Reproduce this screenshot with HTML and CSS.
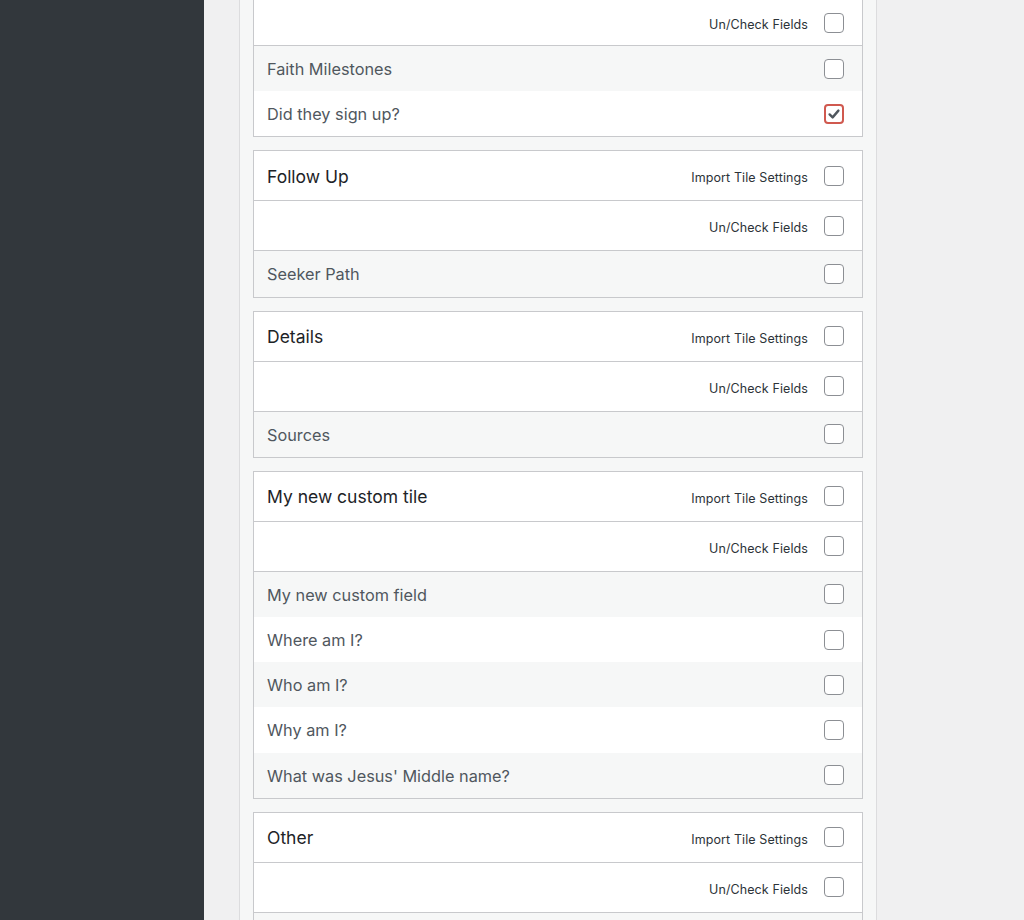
FILE: index.html
```html
<!DOCTYPE html>
<html lang="en">
<head>
<meta charset="utf-8">
<title>Tile settings</title>
<link rel="stylesheet" href="styles.css">
</head>
<body>
<div class="layout">
  <aside class="sidebar"></aside>
  <main class="main">
    <div class="panel">
      <section class="tile tile--cut">
        <div class="row row--toggle"><span class="small">Un/Check Fields</span><span class="cb"></span></div>
        <div class="fields">
          <div class="row row--field"><span class="label">Faith Milestones</span><span class="cb"></span></div>
          <div class="row row--field"><span class="label">Did they sign up?</span><span class="cb cb--checked"><svg viewBox="0 0 20 20" width="16" height="16"><path d="M4.5 10.5 L8.3 14.2 L15.5 5.8" fill="none" stroke="#50575e" stroke-width="3" stroke-linecap="round" stroke-linejoin="round"/></svg></span></div>
        </div>
      </section>

      <section class="tile">
        <div class="row row--head"><span class="title">Follow Up</span><span class="right"><span class="small">Import Tile Settings</span><span class="cb"></span></span></div>
        <div class="row row--toggle"><span class="small">Un/Check Fields</span><span class="cb"></span></div>
        <div class="fields">
          <div class="row row--field"><span class="label">Seeker Path</span><span class="cb"></span></div>
        </div>
      </section>

      <section class="tile">
        <div class="row row--head"><span class="title">Details</span><span class="right"><span class="small">Import Tile Settings</span><span class="cb"></span></span></div>
        <div class="row row--toggle"><span class="small">Un/Check Fields</span><span class="cb"></span></div>
        <div class="fields">
          <div class="row row--field"><span class="label">Sources</span><span class="cb"></span></div>
        </div>
      </section>

      <section class="tile">
        <div class="row row--head"><span class="title">My new custom tile</span><span class="right"><span class="small">Import Tile Settings</span><span class="cb"></span></span></div>
        <div class="row row--toggle"><span class="small">Un/Check Fields</span><span class="cb"></span></div>
        <div class="fields">
          <div class="row row--field"><span class="label">My new custom field</span><span class="cb"></span></div>
          <div class="row row--field"><span class="label">Where am I?</span><span class="cb"></span></div>
          <div class="row row--field"><span class="label">Who am I?</span><span class="cb"></span></div>
          <div class="row row--field"><span class="label">Why am I?</span><span class="cb"></span></div>
          <div class="row row--field"><span class="label">What was Jesus' Middle name?</span><span class="cb"></span></div>
        </div>
      </section>

      <section class="tile">
        <div class="row row--head"><span class="title">Other</span><span class="right"><span class="small">Import Tile Settings</span><span class="cb"></span></span></div>
        <div class="row row--toggle"><span class="small">Un/Check Fields</span><span class="cb"></span></div>
        <div class="fields">
          <div class="row row--field"><span class="label">&nbsp;</span><span class="cb"></span></div>
        </div>
      </section>
    </div>
  </main>
</div>
</body>
</html>
```
FILE: styles.css
```css
* { box-sizing: border-box; }
html, body { margin: 0; padding: 0; }
body {
  font-family: Inter, "Noto Sans", "Liberation Sans", sans-serif;
  height: 920px;
  overflow: hidden;
  background: #f0f0f1;
}
.layout {
  display: flex;
  height: 920px;
}
.sidebar {
  width: 204px;
  flex: none;
  background: #32373c;
}
.main {
  flex: 1;
  padding-left: 35px;
  background: #f0f0f1;
}
.panel {
  width: 638px;
  min-height: 920px;
  background: #f6f7f7;
  border-left: 1px solid #dcdcde;
  border-right: 1px solid #dcdcde;
  padding: 0 13px;
}
.tile {
  background: #fff;
  border: 1px solid #c8c9cc;
  margin-bottom: 13px;
}
.tile--cut {
  border-top: none;
}
.row {
  display: flex;
  align-items: center;
  justify-content: space-between;
  padding: 0 18px 0 13px;
  border-bottom: 1px solid #c8c9cc;
}
.row--head { height: 50px; }
.row--toggle { height: 50px; justify-content: flex-end; }
.tile--cut .row--toggle { height: 46px; }
.row--field { height: 45.2px; border-bottom: none; }
.row--field:nth-child(odd) { background: #f6f7f7; }
.right {
  display: flex;
  align-items: center;
}
.title {
  font-size: 17.5px;
  color: #1d2327;
  padding-top: 1px;
}
.label {
  font-size: 16.3px;
  color: #50575e;
  padding-top: 1px;
}
.small {
  font-size: 12.5px;
  color: #2c3338;
  letter-spacing: 0.1px;
  margin-right: 16px;
  padding-top: 4px;
}
.cb {
  width: 20px;
  height: 20px;
  border: 1.5px solid #8c8f94;
  border-radius: 4px;
  background: #fff;
  display: flex;
  align-items: center;
  justify-content: center;
  flex: none;
}
.cb--checked {
  border: 2px solid #d0594f;
}
```
